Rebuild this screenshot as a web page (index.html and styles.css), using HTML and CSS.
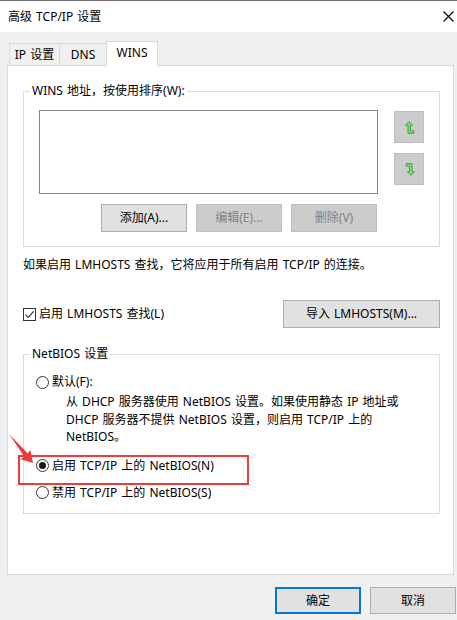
FILE: index.html
```html
<!DOCTYPE html>
<html lang="zh-CN">
<head>
<meta charset="utf-8">
<title>高级 TCP/IP 设置</title>
<link rel="stylesheet" href="styles.css">
</head>
<body>
<div class="window">
  <div class="titlebar">
    <span class="title">高级 TCP/IP 设置</span>
    <svg class="close" width="11" height="11" viewBox="0 0 11 11"><path d="M0.5 0.5 L10.5 10.5 M10.5 0.5 L0.5 10.5" stroke="#000" stroke-width="1.1" fill="none"/></svg>
  </div>
  <div class="tabs">
    <div class="tab tab-ip">IP 设置</div>
    <div class="tab tab-dns">DNS</div>
    <div class="tab tab-wins active">WINS</div>
  </div>
  <div class="panel">
    <fieldset class="group group-wins">
      <legend>WINS 地址，按使用排序(W):</legend>
      <div class="list-row">
        <div class="listbox"></div>
        <div class="order-col">
          <div class="order-btn">
            <svg width="10" height="13" viewBox="0 0 10 13"><polygon points="4,0.6 7.6,4.3 5.5,4.3 5.5,9.8 8.8,9.8 8.8,12.3 3,12.3 3,4.3 0.6,4.3" fill="#7ddc7d" stroke="#3aa53a" stroke-width="1" stroke-linejoin="miter"/></svg>
          </div>
          <div class="order-btn">
            <svg width="10" height="13" viewBox="0 0 10 13"><polygon points="6,12.4 2.4,8.7 4.5,8.7 4.5,3.2 1.2,3.2 1.2,0.7 7,0.7 7,8.7 9.4,8.7" fill="#7ddc7d" stroke="#3aa53a" stroke-width="1" stroke-linejoin="miter"/></svg>
          </div>
        </div>
      </div>
      <div class="btn-row">
        <div class="btn">添加(A)...</div>
        <div class="btn disabled">编辑(E)...</div>
        <div class="btn disabled">删除(V)</div>
      </div>
    </fieldset>
    <p class="note">如果启用 LMHOSTS 查找，它将应用于所有启用 TCP/IP 的连接。</p>
    <div class="lm-row">
      <label class="check">
        <span class="checkbox"><svg width="11" height="11" viewBox="0 0 11 11"><path d="M1.6 5.6 L4.2 8.3 L9.6 2.4" stroke="#333" stroke-width="1.2" fill="none"/></svg></span>
        <span>启用 LMHOSTS 查找(L)</span>
      </label>
      <div class="btn btn-import">导入 LMHOSTS(M)...</div>
    </div>
    <fieldset class="group group-netbios">
      <legend>NetBIOS 设置</legend>
      <div class="radio r-default"><span class="circle"></span><span>默认(F):</span></div>
      <p class="desc">从 DHCP 服务器使用 NetBIOS 设置。如果使用静态 IP 地址或<br>DHCP 服务器不提供 NetBIOS 设置，则启用 TCP/IP 上的<br>NetBIOS。</p>
      <div class="radio r-enable"><span class="circle checked"></span><span>启用 TCP/IP 上的 NetBIOS(N)</span></div>
      <div class="radio r-disable"><span class="circle"></span><span>禁用 TCP/IP 上的 NetBIOS(S)</span></div>
    </fieldset>
  </div>
  <div class="footer">
    <div class="btn btn-ok">确定</div>
    <div class="btn btn-cancel">取消</div>
  </div>
  <div class="highlight"></div>
  <svg class="pointer" width="40" height="40" viewBox="0 0 40 40"><polygon points="2,2 20.6,21.2 23.4,18.3 26,31 13.5,27.2 17.3,24.5" fill="#ee3b3b"/></svg>
</div>
</body>
</html>
```

FILE: styles.css
```css
* { box-sizing: border-box; }
html, body { margin: 0; padding: 0; }
body {
  font-family: "Noto Sans", "Noto Sans CJK SC", sans-serif;
  font-size: 12px;
  line-height: 16px;
  word-spacing: 1px;
  color: #000;
}
.window {
  position: relative;
  width: 457px;
  height: 620px;
  background: #f0f0f0;
  overflow: hidden;
}
.titlebar {
  height: 32px;
  background: #fff;
  border-top: 1px solid #6e6e6e;
  display: flex;
  align-items: center;
  justify-content: space-between;
  padding: 0 3px 0 8px;
}
.title { font-size: 12px; }
.close { display: block; }
.tabs {
  display: flex;
  align-items: flex-end;
  height: 24px;
  margin-top: 9px;
  padding-left: 9px;
  position: relative;
  z-index: 2;
}
.tab {
  height: 22px;
  background: #f0f0f0;
  border: 1px solid #d9d9d9;
  border-bottom: none;
  text-align: center;
  line-height: 21px;
}
.tab-ip { width: 51px; }
.tab-dns { width: 46px; border-left: none; border-right: none; }
.tab-wins { width: 52px; }
.tab.active {
  height: 25px;
  background: #fff;
  margin-bottom: -1px;
  line-height: 22px;
}
.panel {
  position: relative;
  z-index: 1;
  margin: 0 3px 0 7px;
  height: 510px;
  background: #fff;
  border: 1px solid #d9d9d9;
  padding: 0 0 0 15px;
}
.group {
  width: 417px;
  margin: 0;
  padding: 0;
  border: 1px solid #dcdcdc;
  min-width: 0;
}
.group legend {
  margin-left: 6px;
  padding: 0 2px;
  font-size: 12px;
  line-height: 16px;
}
.group-wins {
  margin-top: 17px;
  padding-bottom: 14px;
}
.list-row {
  display: flex;
  margin-top: 11px;
  padding-left: 15px;
}
.listbox {
  width: 339px;
  height: 84px;
  border: 1px solid #82868f;
  background: #fff;
}
.order-col {
  display: flex;
  flex-direction: column;
  gap: 10px;
  margin-left: 16px;
  padding-top: 1px;
}
.order-btn {
  width: 30px;
  height: 32px;
  background: #cccccc;
  border: 1px solid #bfbfbf;
  display: flex;
  align-items: center;
  justify-content: center;
  padding-left: 2px;
}
.order-btn svg { display: block; }
.btn-row {
  display: flex;
  gap: 9px;
  margin-top: 10px;
  padding-left: 77px;
}
.btn {
  width: 86px;
  height: 28px;
  background: #e1e1e1;
  border: 1px solid #adadad;
  display: flex;
  align-items: center;
  justify-content: center;
}
.btn.disabled {
  background: #cccccc;
  border-color: #bfbfbf;
  color: #838383;
}
.note {
  margin: 10px 0 0 0;
  white-space: nowrap;
}
.lm-row {
  width: 417px;
  margin-top: 27px;
  display: flex;
  align-items: center;
  justify-content: space-between;
}
.check {
  display: flex;
  align-items: center;
  gap: 3px;
}
.checkbox {
  width: 13px;
  height: 13px;
  border: 1px solid #333;
  background: #fff;
  display: flex;
  align-items: center;
  justify-content: center;
}
.checkbox svg { display: block; }
.btn-import { width: 157px; }
.group-netbios {
  margin-top: 18px;
  padding-bottom: 12px;
}
.radio {
  display: flex;
  align-items: center;
  gap: 3px;
  margin-left: 12px;
  height: 16px;
}
.circle {
  width: 13px;
  height: 13px;
  border: 1px solid #333;
  border-radius: 50%;
  background: #fff;
  display: flex;
  align-items: center;
  justify-content: center;
}
.circle.checked::after {
  content: "";
  width: 7px;
  height: 7px;
  border-radius: 50%;
  background: #1a1a1a;
}
.r-default { margin-top: 12px; }
.desc {
  margin: 3px 0 0 42px;
  line-height: 17.5px;
  white-space: nowrap;
}
.r-enable { margin-top: 12px; }
.r-disable { margin-top: 11px; }
.footer {
  display: flex;
  justify-content: flex-end;
  gap: 9px;
  margin-top: 12px;
  padding-right: 1px;
}
.btn-ok {
  width: 86px;
  height: 27px;
  border: 2px solid #0078d7;
}
.btn-cancel {
  width: 86px;
  height: 27px;
}
.highlight {
  position: absolute;
  left: 18px;
  top: 455px;
  width: 231px;
  height: 30px;
  border: 2px solid #ee3b3b;
  z-index: 3;
}
.pointer {
  position: absolute;
  left: 7px;
  top: 432px;
  z-index: 3;
}
```
